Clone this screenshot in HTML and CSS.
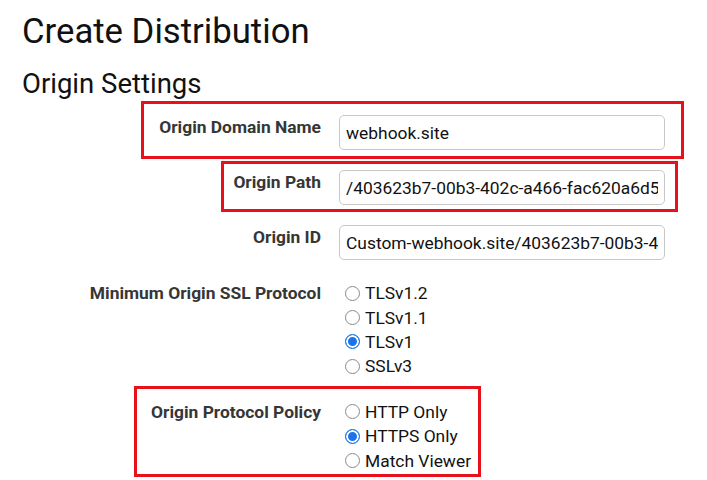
FILE: index.html
```html
<!DOCTYPE html>
<html>
<head>
<meta charset="utf-8">
<link rel="stylesheet" href="styles.css">
</head>
<body>
<div class="page">
  <h1 class="title">Create Distribution</h1>
  <h2 class="subtitle">Origin Settings</h2>
  <div class="form">
    <div class="label">Origin Domain Name</div>
    <div class="field"><input class="text" type="text" value="webhook.site"></div>

    <div class="label">Origin Path</div>
    <div class="field"><input class="text" type="text" value="/403623b7-00b3-402c-a466-fac620a6d5"></div>

    <div class="label">Origin ID</div>
    <div class="field"><input class="text" type="text" value="Custom-webhook.site/403623b7-00b3-402c-a466-fac620a6d5"></div>

    <div class="label label-radio">Minimum Origin SSL Protocol</div>
    <div class="field radios">
      <label class="opt"><input class="radio" type="radio" name="ssl">TLSv1.2</label>
      <label class="opt"><input class="radio" type="radio" name="ssl">TLSv1.1</label>
      <label class="opt"><input class="radio" type="radio" name="ssl" checked>TLSv1</label>
      <label class="opt"><input class="radio" type="radio" name="ssl">SSLv3</label>
    </div>

    <div class="label label-radio">Origin Protocol Policy</div>
    <div class="field radios">
      <label class="opt"><input class="radio" type="radio" name="pol">HTTP Only</label>
      <label class="opt"><input class="radio" type="radio" name="pol" checked>HTTPS Only</label>
      <label class="opt"><input class="radio" type="radio" name="pol">Match Viewer</label>
    </div>
  </div>
  <div class="mark mark-1"></div>
  <div class="mark mark-2"></div>
  <div class="mark mark-3"></div>
</div>
</body>
</html>
```
FILE: styles.css
```css
html, body {
  margin: 0;
  padding: 0;
  background: #ffffff;
}
body {
  font-family: Roboto, "Liberation Sans", Arial, sans-serif;
  color: #111111;
  width: 707px;
  height: 480px;
  overflow: hidden;
}
.page {
  position: relative;
  width: 707px;
  height: 480px;
}
.title {
  margin: 0;
  padding: 11px 0 0 22px;
  font-size: 34.7px;
  line-height: 40px;
  font-weight: 400;
  color: #111;
}
.subtitle {
  margin: 0;
  padding: 18px 0 0 22px;
  font-size: 27.5px;
  line-height: 30px;
  font-weight: 400;
  color: #111;
}
.form {
  display: grid;
  grid-template-columns: 321px 326px;
  column-gap: 18px;
  row-gap: 20px;
  margin-top: 16px;
}
.label {
  text-align: right;
  font-size: 17.4px;
  font-weight: 700;
  color: #363636;
  line-height: 20px;
  padding-top: 2px;
  white-space: nowrap;
}
.label-radio {
  line-height: 24.4px;
  padding-top: 1px;
}
.text {
  box-sizing: border-box;
  width: 326px;
  height: 35px;
  margin: 0;
  padding: 0 6px;
  border: 1px solid #c8c8c8;
  border-radius: 5px;
  font-family: Roboto, "Liberation Sans", Arial, sans-serif;
  font-size: 17.4px;
  color: #111;
  background: #fff;
  outline: none;
}
.radios {
  display: flex;
  flex-direction: column;
  padding-top: 1px;
}
.opt {
  display: flex;
  align-items: center;
  height: 24.4px;
  font-size: 17.4px;
  color: #111;
  padding-left: 6px;
  white-space: nowrap;
}
.radio {
  appearance: none;
  -webkit-appearance: none;
  box-sizing: border-box;
  width: 15px;
  height: 15px;
  margin: 0 5px 0 0;
  border: 1px solid #8a8a8a;
  border-radius: 50%;
  background: #fff;
  flex: none;
}
.radio:checked {
  border: 1px solid #1a73e8;
  background: #1a73e8;
  box-shadow: inset 0 0 0 2px #ffffff;
}
.mark {
  position: absolute;
  box-sizing: border-box;
  border: 3px solid #e8101a;
}
.mark-1 {
  left: 141px;
  top: 101px;
  width: 543px;
  height: 58px;
}
.mark-2 {
  left: 221px;
  top: 161px;
  width: 457px;
  height: 51px;
}
.mark-3 {
  left: 134px;
  top: 386px;
  width: 347px;
  height: 91px;
}
```
